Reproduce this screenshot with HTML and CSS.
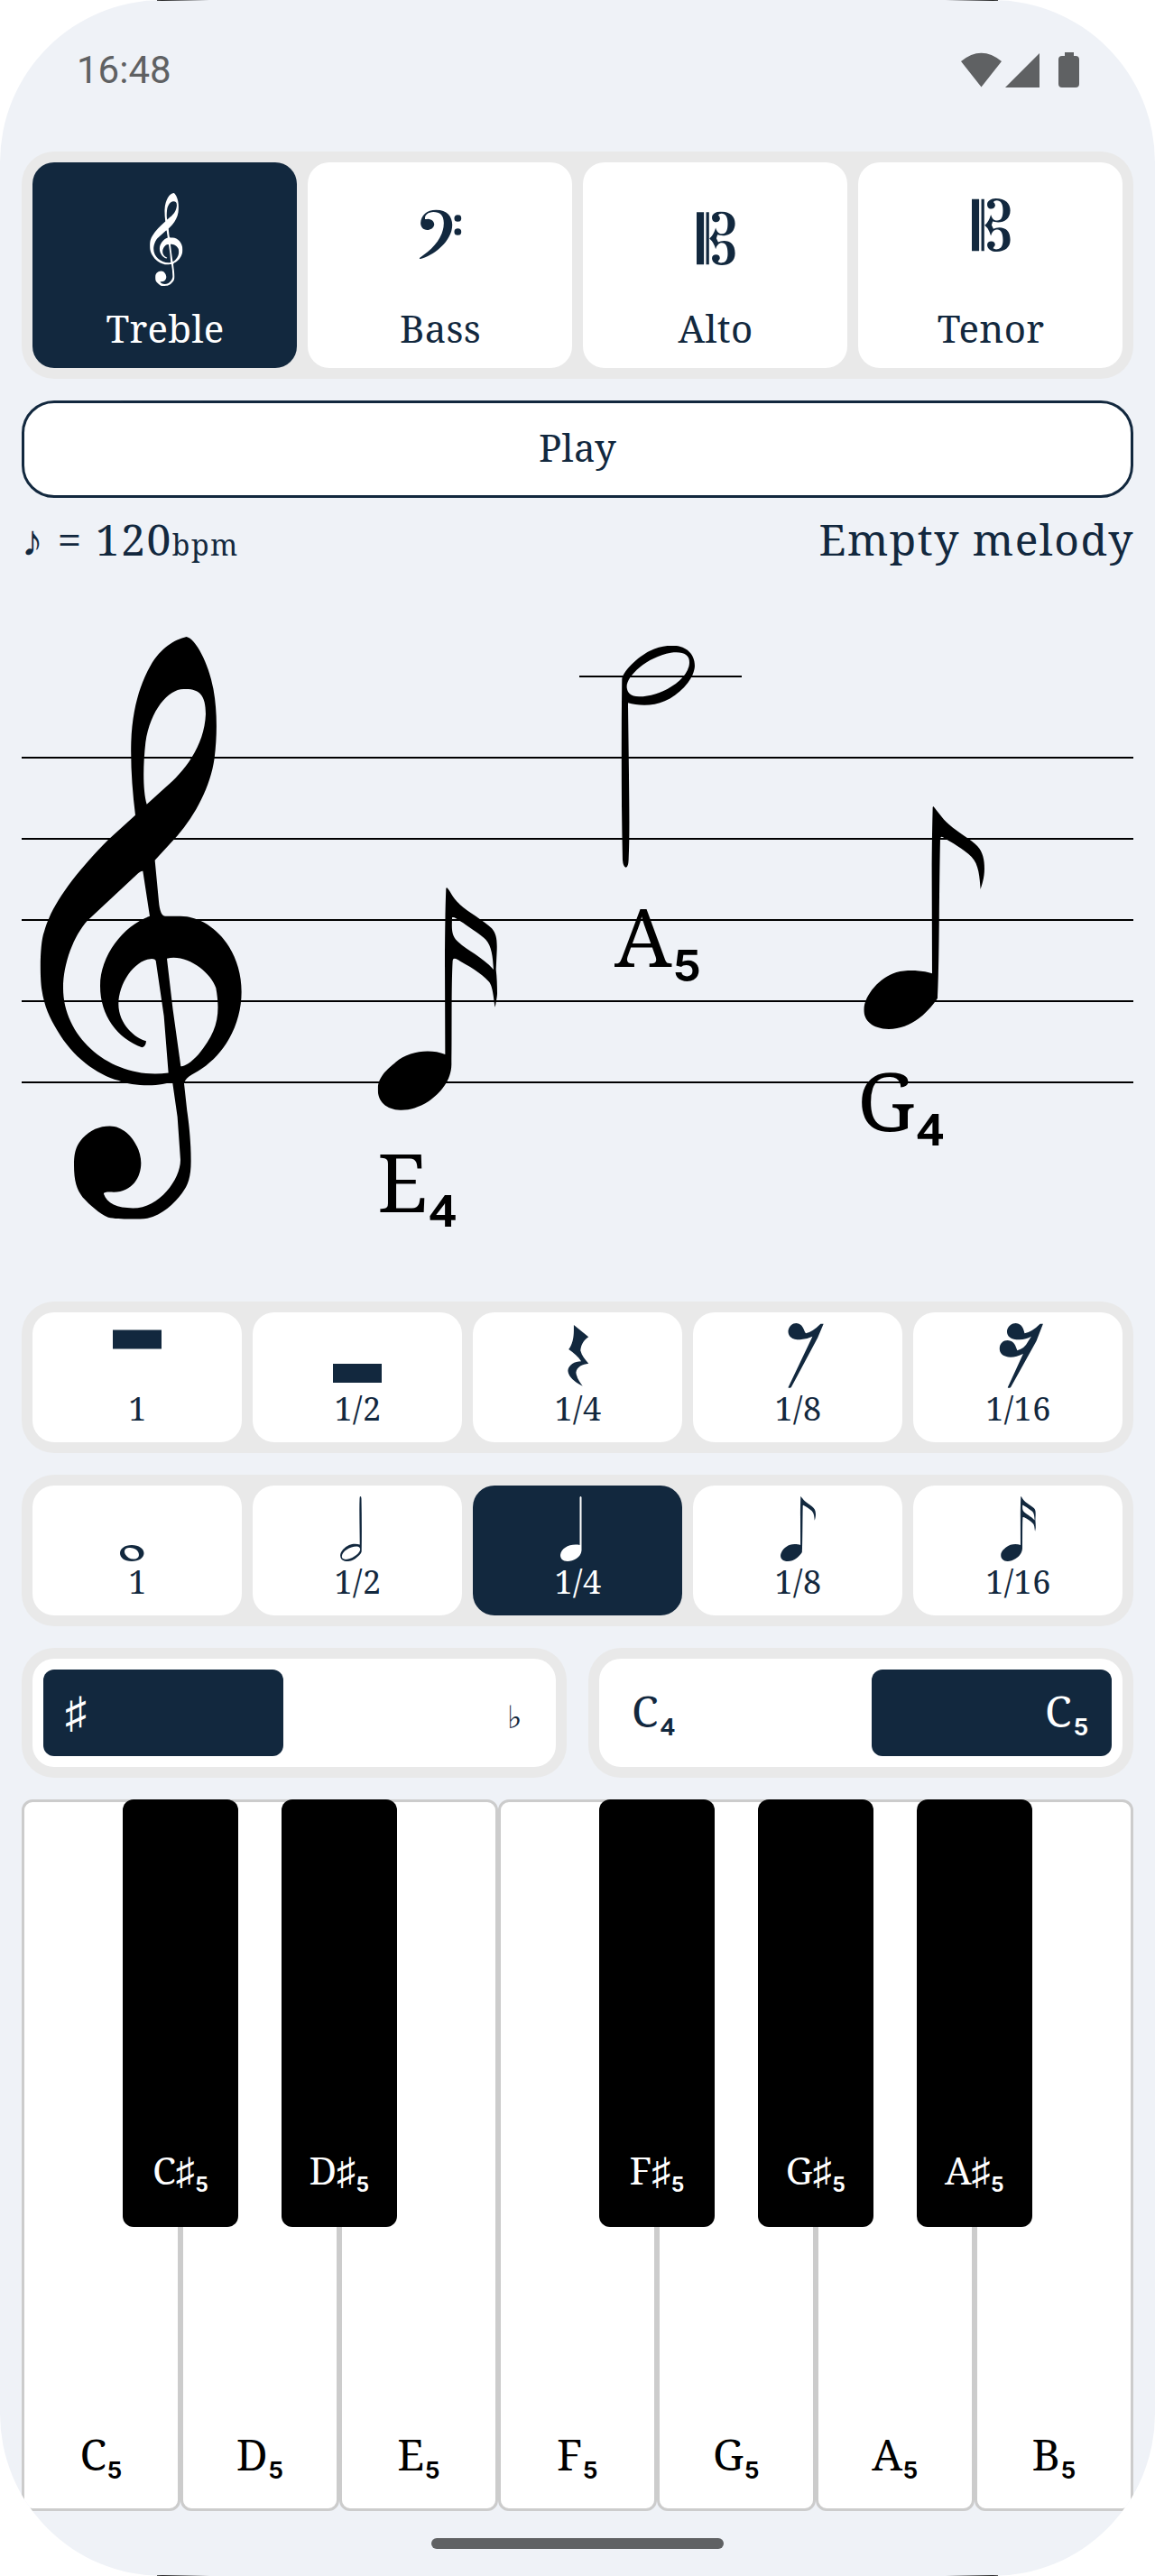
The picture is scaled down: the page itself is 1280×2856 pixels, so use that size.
FILE: index.html
```html
<!DOCTYPE html>
<html lang="en">
<head>
<meta charset="utf-8">
<title>Melody</title>
<link rel="stylesheet" href="styles.css">
</head>
<body>
<svg class="defs" aria-hidden="true">
  <defs>
    <symbol id="treble" viewBox="72 58 673 1447" preserveAspectRatio="none">
      <path fill-rule="evenodd" d="M560 58C590 62 635 125 650 190C662 240 663 300 653 360C640 430 590 500 530 552L455 613L468 715Q472 752 490 752L540 752C640 752 743 830 743 940C743 1010 700 1080 625 1123C590 1143 558 1148 552 1167L562 1235C568 1265 575 1310 575 1360C575 1400 565 1420 545 1440C520 1465 480 1494 430 1502C400 1505 330 1505 300 1500C270 1490 240 1470 215 1450C195 1430 186 1410 186 1370C186 1335 195 1320 215 1303C240 1283 270 1273 305 1273C365 1273 409 1325 409 1365C409 1400 380 1437 318 1437C300 1437 285 1436 285 1442C295 1465 330 1477 382 1477C470 1477 540 1405 540 1357L530 1250L514 1167Q505 1165 480 1169C440 1175 370 1172 335 1160C260 1145 180 1100 130 1035C105 1005 87 975 79 935C72 900 72 820 87 790C110 725 190 645 300 562L390 501C380 440 374 380 376 320C380 230 410 170 440 130C475 85 520 65 560 58ZM428 474C415 440 415 380 424 320C440 240 500 188 550 188C600 186 624 200 624 250C620 330 550 395 490 432ZM415 640L438 752C350 775 273 850 273 925C273 1000 330 1055 412 1078Q425 1075 426 1062C390 1055 334 1020 334 970C334 920 385 862 440 858Q455 857 458 862L485 1000L500 1141C320 1160 150 1060 150 930C150 870 185 800 232 762L400 645Q412 638 415 640ZM495 857C560 845 640 890 658 930C675 1000 660 1040 600 1095C570 1120 545 1127 541 1124L515 985Z"/>
    </symbol>
    <symbol id="cclef" viewBox="323 223 106 178" preserveAspectRatio="none">
      <path d="M323 225H343V399H323ZM349 225H357V399H349ZM388 223C415 223 428 240 428 263C428 290 412 303 395 303Q385 302 380 300L377 312L382 325Q388 320 398 320C415 320 428 332 428 362C428 388 412 401 392 401C372 401 365 388 365 378C365 370 370 366 376 366C384 366 388 373 386 381Q383 386 381 390Q386 394 392 393C404 392 408 380 408 362C408 340 403 327 392 327C384 327 378 335 375 348Q370 325 358 313Q370 300 375 277C379 292 384 297 392 297C404 297 408 285 408 263C408 240 402 231 391 230Q384 230 382 235Q386 238 387 246C386 254 382 258 376 258C368 258 365 250 365 243C365 232 375 223 388 223Z"/>
    </symbol>
    <symbol id="eighth" viewBox="82 72 401 741">
      <path d="M313 72C325 85 340 110 365 132C400 163 440 182 460 205C478 225 483 250 483 280C483 310 474 335 470 348C467 310 465 265 440 240C415 215 370 190 350 178Q338 168 336 180C332 350 333 600 327 710C290 765 235 812 165 813C110 812 82 785 82 748C84 700 135 640 190 624C230 614 280 618 309 628L308 300C308 200 310 120 311 75Z"/>
    </symbol>
    <symbol id="sixteenth" viewBox="56 72 397 741">
      <path fill-rule="evenodd" d="M285 72C300 85 300 105 340 138C380 168 412 185 435 208C450 225 453 245 452 280L449 345C452 370 453 400 453 425C452 440 448 460 446 470C442 455 440 400 425 385C400 355 350 328 322 312Q306 303 305 315C300 400 303 560 301 660C300 715 265 755 225 783C190 805 160 813 130 812C85 810 56 785 56 743C56 700 90 675 115 653C160 615 230 608 280 627L279 320C279 220 281 120 283 75ZM303 172C310 168 320 178 340 190C370 212 400 230 415 245C435 268 438 300 441 345C400 300 350 280 320 250C300 228 302 210 303 172Z"/>
    </symbol>
    <symbol id="half" viewBox="205 78 246 738">
      <path fill-rule="evenodd" d="M208 190C208 165 260 115 300 95C340 75 380 75 400 80C435 90 450 115 450 145C448 190 400 240 350 262C310 280 260 277 228 268L231 500C232 600 234 700 230 790Q229 815 221 815Q212 815 210 790C206 600 205 400 208 190ZM224 215C222 180 290 115 370 101C410 96 433 105 432 135C430 190 340 247 265 247C235 247 225 232 224 215Z"/>
    </symbol>
  </defs>
</svg>

<main class="screen">
  <header class="status">
    <span class="clock">16:48</span>
    <svg class="status-icons" viewBox="1064 56 134 44">
      <path d="M1065 68Q1087.500 49.500 1110 68L1087.500 96.500ZM1152 59V97H1114ZM1180 58H1190V62H1192Q1196 62 1196 66V93Q1196 97 1192 97H1177Q1173 97 1173 93V66Q1173 62 1177 62H1180Z"/>
    </svg>
  </header>

  <section class="panel clefs">
    <button class="card on"><svg viewBox="0 0 293 155"><use href="#treble" x="130" y="34" width="36.500" height="103"/></svg><span>Treble</span></button>
    <button class="card"><svg viewBox="0 0 293 155"><g transform="translate(-321 -20) scale(.40816 .33333)"><path d="M1135 218C1165 218 1179 240 1179 268C1179 320 1130 370 1093 381Q1088 381 1091 377C1125 350 1156 310 1156 262C1156 235 1145 225 1128 225C1112 226 1104 235 1105 249Q1108 250 1113 248C1124 249 1130 257 1130 267C1129 278 1120 285 1111 285C1100 285 1093 275 1093 262C1094 236 1110 218 1135 218Z"/><ellipse cx="1194" cy="246" rx="9.500" ry="11.500"/><ellipse cx="1194" cy="291" rx="9.500" ry="11.500"/></g></svg><span>Bass</span></button>
    <button class="card"><svg viewBox="0 0 293 155"><use href="#cclef" x="126" y="54.500" width="43" height="59.500"/></svg><span>Alto</span></button>
    <button class="card"><svg viewBox="0 0 293 155"><use href="#cclef" x="126" y="40" width="43" height="59"/></svg><span>Tenor</span></button>
  </section>

  <button class="play">Play</button>

  <div class="meta">
    <div class="tempo">♪ = 120<span class="unit">bpm</span></div>
    <div class="melody">Empty melody</div>
  </div>

  <svg class="staff" viewBox="24 646 1232 797">
    <path class="lines" d="M24 840H1256M24 930H1256M24 1020H1256M24 1110H1256M24 1200H1256M642 750H822"/>
    <use href="#treble" x="44" y="706" width="224.300" height="646"/>
    <use href="#sixteenth" x="418.700" y="984" width="132.300" height="247"/>
    <use href="#half" x="688.300" y="716" width="82" height="246"/>
    <use href="#eighth" x="957.300" y="894" width="133.700" height="247"/>
    <text class="pitch" x="418" y="1344">E<tspan>₄</tspan></text>
    <text class="pitch" x="681" y="1072">A<tspan>₅</tspan></text>
    <text class="pitch" x="950" y="1254">G<tspan>₄</tspan></text>
  </svg>

  <div class="controls">
    <section class="panel durations">
      <button class="card"><svg viewBox="0 0 232 86"><path d="M89 19.500H143V40.500H89Z"/></svg><span>1</span></button>
      <button class="card"><svg viewBox="0 0 232 86"><path d="M89 57H143V78H89Z"/></svg><span>1/2</span></button>
      <button class="card"><svg viewBox="0 0 232 86"><path transform="translate(-524 -35) scale(.81633 .33333)" d="M779 147L799 187C793 197 789 210 788 232C790 250 794 262 799 275C791 278 783 285 782 305C783 325 788 340 791 350C778 335 771 315 771 298C772 280 780 268 789 268C785 252 779 240 772 228C777 212 779 190 779 165Z"/></svg><span>1/4</span></button>
      <button class="card"><svg viewBox="0 0 232 86"><path transform="translate(-768 -35) scale(.81633 .33333)" d="M1114 143L1118 143L1110 190L1074 355Q1071 358 1070 355L1103 185Q1095 195 1086 196C1075 196 1070 185 1070 167C1071 150 1076 141 1081 141C1090 142 1091 165 1094 175Q1104 168 1114 143Z"/></svg><span>1/8</span></button>
      <button class="card"><svg viewBox="0 0 232 86"><path transform="translate(-1012 -35) scale(.81633 .33333)" d="M1412 143L1416 143L1407 200L1372 355Q1369 358 1368 355L1389 243Q1380 254 1372 254C1362 254 1357 242 1357 226C1357 208 1362 198 1368 198C1377 199 1379 218 1381 232Q1391 225 1395 205L1400 185Q1393 195 1384 196C1372 196 1367 185 1367 167C1368 150 1374 141 1379 141C1388 142 1390 165 1391 175Q1402 168 1412 143Z"/></svg><span>1/16</span></button>
    </section>

    <section class="panel durations">
      <button class="card"><svg viewBox="0 0 232 86"><path fill-rule="evenodd" d="M110 66C118 66 123.500 70 123.500 75C123.500 80 118 84 110 84C102 84 97 80 97 75C97 70 102 66 110 66ZM107 69C102 69 101 73 103 76.500C105 80 109 82 113 81.500C118 81 119 77 117 73.500C115 70 111 69 107 69Z"/></svg><span>1</span></button>
      <button class="card"><svg viewBox="0 0 232 86"><use href="#half" transform="rotate(180 109 48)" x="97" y="12" width="24" height="72"/></svg><span>1/2</span></button>
      <button class="card on"><svg viewBox="0 0 232 86"><path d="M118.500 13Q119.500 11 120.500 13V72C120 80 111 84 105 84C99.500 84 97 81 97 77C98 69 108 64 118.500 66Z"/></svg><span>1/4</span></button>
      <button class="card"><svg viewBox="0 0 232 86"><use href="#eighth" x="97" y="12" width="39" height="72"/></svg><span>1/8</span></button>
      <button class="card"><svg viewBox="0 0 232 86"><use href="#sixteenth" x="97" y="12" width="39" height="72"/></svg><span>1/16</span></button>
    </section>

    <div class="toggles">
      <div class="panel toggle"><div class="track"><div class="choice on">♯</div><div class="choice end flat">♭</div></div></div>
      <div class="panel toggle"><div class="track"><div class="choice">C<i>₄</i></div><div class="choice end on">C<i>₅</i></div></div></div>
    </div>

    <section class="keyboard">
      <div class="key"><span>C<i>₅</i></span></div>
      <div class="key"><div class="black"><span>C♯<i>₅</i></span></div><span>D<i>₅</i></span></div>
      <div class="key"><div class="black"><span>D♯<i>₅</i></span></div><span>E<i>₅</i></span></div>
      <div class="key"><span>F<i>₅</i></span></div>
      <div class="key"><div class="black"><span>F♯<i>₅</i></span></div><span>G<i>₅</i></span></div>
      <div class="key"><div class="black"><span>G♯<i>₅</i></span></div><span>A<i>₅</i></span></div>
      <div class="key"><div class="black"><span>A♯<i>₅</i></span></div><span>B<i>₅</i></span></div>
    </section>
  </div>

  <footer class="nav"><div class="handle"></div></footer>
</main>
</body>
</html>
```

FILE: styles.css
```css
:root {
  --ink: #12283e;
  --bg: #eff2f7;
  --panel: #e9e9e9;
}

* { box-sizing: border-box; }

body {
  margin: 0;
  background: #fff;
  color: var(--ink);
  font-family: "Noto Serif";
}

button {
  font: inherit;
  color: inherit;
  border: 0;
  padding: 0;
}

i { font-style: normal; }
i, tspan { font-family: Roboto, sans-serif; }

.defs { display: block; width: 0; height: 0; }

.screen {
  position: relative;
  width: 1280px;
  height: 2856px;
  padding: 0 24px;
  display: flex;
  flex-direction: column;
  border-radius: 180px;
  overflow: hidden;
  background: var(--bg);
}

/* Thin bezel shadow where the rounded corners meet the straight edges. */
.screen::before,
.screen::after {
  content: "";
  position: absolute;
  left: 174px;
  right: 174px;
  height: 1px;
  background: linear-gradient(90deg, #111, transparent 58px, transparent calc(100% - 58px), #111);
}
.screen::before { top: 0; }
.screen::after { bottom: 0; }

.status {
  height: 168px;
  padding: 56px 58px 0 61px;
  display: flex;
  justify-content: space-between;
  color: #5f6163;
}

.clock { font: 42px/44px Roboto, sans-serif; }

.status-icons {
  width: 134px;
  height: 44px;
  fill: currentColor;
}

.panel {
  background: var(--panel);
  border-radius: 36px;
  padding: 12px;
  display: flex;
  gap: 12px;
}

.card {
  flex: 1;
  display: flex;
  flex-direction: column;
  background: #fff;
  border-radius: 24px;
  text-align: center;
}

.card svg { display: block; width: 100%; fill: currentColor; }

.on,
.card.on { background: var(--ink); color: #fff; }

.clefs { height: 252px; }
.clefs svg { height: 155px; }
.clefs span { padding-left: 1px; font-size: 42px; line-height: 57px; letter-spacing: .3px; }

.play {
  height: 108px;
  margin-top: 24px;
  padding-bottom: 5px;
  border: 3px solid var(--ink);
  border-radius: 36px;
  background: #fff;
  font-size: 42px;
  letter-spacing: .3px;
}

.meta {
  height: 94px;
  display: flex;
  justify-content: space-between;
  font-size: 48px;
  line-height: 91px;
  letter-spacing: 1.5px;
}

.melody { margin-right: -1px; }
.unit { font-size: 32px; }

.staff {
  display: block;
  width: 1232px;
  height: 797px;
  fill: #000;
}

.lines { stroke: #000; stroke-width: 2; shape-rendering: crispEdges; }
.pitch { font-size: 90px; }

.controls { display: flex; flex-direction: column; gap: 24px; }

.durations { height: 168px; }
.durations svg { height: 86px; }
.durations span { padding-left: 1px; font-size: 36px; line-height: 42px; letter-spacing: .5px; }

.toggles { display: flex; gap: 24px; }
.toggle { flex: 1; height: 144px; }

.track {
  flex: 1;
  display: flex;
  justify-content: space-between;
  padding: 12px;
  border-radius: 24px;
  background: #fff;
}

.choice {
  width: 266px;
  height: 96px;
  padding: 0 24px;
  border-radius: 12px;
  font-size: 48px;
  line-height: 92px;
  letter-spacing: 1.5px;
}

.end { text-align: right; }
.flat { font-size: 35px; line-height: 104px; }

.keyboard { height: 789px; display: flex; color: #000; }

.key {
  position: relative;
  flex: 1;
  display: flex;
  align-items: flex-end;
  justify-content: center;
  padding-bottom: 26px;
  border: 3px solid #ccc;
  border-radius: 12px;
  background: #fff;
  font-size: 48px;
  line-height: 64px;
}

/* Black keys straddle the boundary with the previous white key. */
.black {
  position: absolute;
  left: -67px;
  top: -3px;
  width: 128px;
  height: 474px;
  display: flex;
  align-items: flex-end;
  justify-content: center;
  padding-bottom: 31px;
  border-radius: 12px;
  background: #000;
  color: #fff;
  font-size: 42px;
  line-height: 60px;
}

.nav { height: 72px; display: flex; justify-content: center; padding-top: 30px; }
.handle { width: 324px; height: 12px; border-radius: 6px; background: #5f6163; }
```
